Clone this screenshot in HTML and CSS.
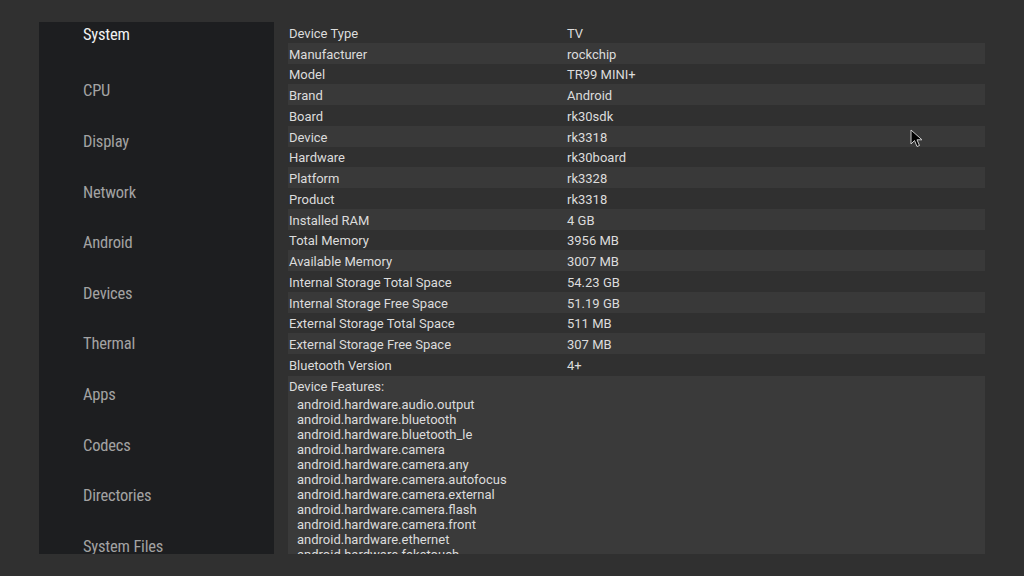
FILE: index.html
```html
<!DOCTYPE html>
<html lang="en">
<head>
  <meta charset="UTF-8">
  <title>Device Info</title>
  <link rel="stylesheet" href="styles.css">
</head>
<body>
  <div class="sidebar">
    <div class="nav-item active">System</div>
    <div class="nav-item">CPU</div>
    <div class="nav-item">Display</div>
    <div class="nav-item">Network</div>
    <div class="nav-item">Android</div>
    <div class="nav-item">Devices</div>
    <div class="nav-item">Thermal</div>
    <div class="nav-item">Apps</div>
    <div class="nav-item">Codecs</div>
    <div class="nav-item">Directories</div>
    <div class="nav-item">System Files</div>
  </div>

  <div class="panel">
    <div class="info-row"><span class="label">Device Type</span><span>TV</span></div>
    <div class="info-row"><span class="label">Manufacturer</span><span>rockchip</span></div>
    <div class="info-row"><span class="label">Model</span><span>TR99 MINI+</span></div>
    <div class="info-row"><span class="label">Brand</span><span>Android</span></div>
    <div class="info-row"><span class="label">Board</span><span>rk30sdk</span></div>
    <div class="info-row"><span class="label">Device</span><span>rk3318</span></div>
    <div class="info-row"><span class="label">Hardware</span><span>rk30board</span></div>
    <div class="info-row"><span class="label">Platform</span><span>rk3328</span></div>
    <div class="info-row"><span class="label">Product</span><span>rk3318</span></div>
    <div class="info-row"><span class="label">Installed RAM</span><span>4 GB</span></div>
    <div class="info-row"><span class="label">Total Memory</span><span>3956 MB</span></div>
    <div class="info-row"><span class="label">Available Memory</span><span>3007 MB</span></div>
    <div class="info-row"><span class="label">Internal Storage Total Space</span><span>54.23 GB</span></div>
    <div class="info-row"><span class="label">Internal Storage Free Space</span><span>51.19 GB</span></div>
    <div class="info-row"><span class="label">External Storage Total Space</span><span>511 MB</span></div>
    <div class="info-row"><span class="label">External Storage Free Space</span><span>307 MB</span></div>
    <div class="info-row"><span class="label">Bluetooth Version</span><span>4+</span></div>

    <div class="features">
      <div class="features-title">Device Features:</div>
      <div class="features-list">
        <div>android.hardware.audio.output</div>
        <div>android.hardware.bluetooth</div>
        <div>android.hardware.bluetooth_le</div>
        <div>android.hardware.camera</div>
        <div>android.hardware.camera.any</div>
        <div>android.hardware.camera.autofocus</div>
        <div>android.hardware.camera.external</div>
        <div>android.hardware.camera.flash</div>
        <div>android.hardware.camera.front</div>
        <div>android.hardware.ethernet</div>
        <div>android.hardware.faketouch</div>
      </div>
    </div>
  </div>

  <svg class="cursor" width="14" height="20" viewBox="0 0 14 20">
    <path d="M1 1 L1 15 L4.5 11.5 L7 17.5 L9.5 16.5 L7 10.8 L12 10.8 Z" fill="#000" stroke="#ccc" stroke-width="1"/>
  </svg>
</body>
</html>
```

FILE: styles.css
```css
* {
  box-sizing: border-box;
}

body {
  margin: 0;
  padding: 22px 39px;
  height: 576px;
  background-color: #303030;
  display: flex;
  gap: 14px;
  overflow: hidden;
  font-family: Roboto, "Noto Sans", sans-serif;
}

.sidebar {
  width: 235px;
  height: 532px;
  background-color: #1d1e20;
  overflow: hidden;
  display: flex;
  flex-direction: column;
  flex-shrink: 0;
}

.nav-item {
  height: 50.6px;
  flex-shrink: 0;
  display: flex;
  align-items: center;
  padding-left: 44px;
  font-size: 16.5px;
  font-stretch: condensed;
  letter-spacing: -0.2px;
  color: #a3a3a3;
}

.nav-item.active {
  height: 24px;
  margin-bottom: 19.7px;
  color: #f2f2f2;
}

.panel {
  width: 697px;
  height: 532px;
  display: flex;
  flex-direction: column;
  overflow: hidden;
}

.info-row {
  height: 20.75px;
  flex-shrink: 0;
  display: flex;
  align-items: center;
  padding: 2px 0 0 1px;
  font-size: 13px;
  color: #dcdcdc;
}

.info-row:nth-child(even) {
  background-color: #393939;
}

.label {
  width: 278px;
}

.features {
  flex: 1;
  min-height: 0;
  margin-top: 1px;
  background-color: #3a3a3a;
  overflow: hidden;
  padding: 3px 1px 0;
  font-size: 13px;
  color: #dcdcdc;
}

.features-title {
  height: 18px;
  line-height: 15px;
}

.features-list {
  padding-left: 8px;
  line-height: 15px;
}

.cursor {
  position: absolute;
  left: 910px;
  top: 129px;
}
```
